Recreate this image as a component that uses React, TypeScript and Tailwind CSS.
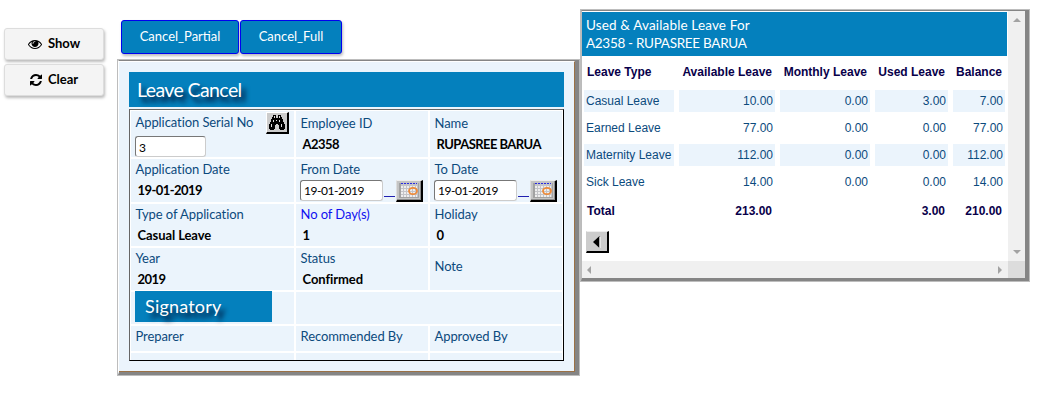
import type { ReactNode } from "react";

const leaveRows = [
  ["Casual Leave", "10.00", "0.00", "3.00", "7.00"],
  ["Earned Leave", "77.00", "0.00", "0.00", "77.00"],
  ["Maternity Leave", "112.00", "0.00", "0.00", "112.00"],
  ["Sick Leave", "14.00", "0.00", "0.00", "14.00"],
];

function Label({ children }: { children: ReactNode }) {
  return <div className="pl-[4.5px] text-[13px] leading-[18px] tracking-[-0.08px] text-[#0b4a7d]">{children}</div>;
}

function Value({ children, tight = false }: { children: ReactNode; tight?: boolean }) {
  return (
    <div className={`pt-[3px] pl-[6.5px] text-[13px] leading-[18px] font-bold text-black ${tight ? "tracking-[-0.55px]" : "tracking-[-0.08px]"}`}>
      {children}
    </div>
  );
}

function Cell({ children, className = "" }: { children?: ReactNode; className?: string }) {
  return <div className={`bg-[#ebf4fc] ${className}`}>{children}</div>;
}

function EyeIcon() {
  return (
    <svg className="mr-[6px] size-[14px]" viewBox="0 0 1792 1792" fill="currentColor">
      <path d="M1664 960q-152-236-381-353 61 104 61 225 0 185-131.500 316.500t-316.500 131.500-316.500-131.500-131.500-316.500q0-121 61-225-229 117-381 353 133 205 333.500 326.500t434.500 121.500 434.500-121.500 333.500-326.500zm-720-384q0-20-14-34t-34-14q-125 0-214.500 89.500t-89.500 214.500q0 20 14 34t34 14 34-14 14-34q0-86 61-147t147-61q20 0 34-14t14-34zm848 384q0 34-20 69-140 230-376.500 368.500t-499.500 138.500-499.500-139-376.500-368q-20-35-20-69t20-69q140-229 376.500-368t499.500-139 499.500 139 376.500 368q20 35 20 69z" />
    </svg>
  );
}

function RefreshIcon() {
  return (
    <svg className="mr-[6px] size-[14px]" viewBox="0 0 1792 1792" fill="currentColor">
      <path d="M1639 1056q0 5-1 7-64 268-268 434.500t-478 166.500q-146 0-282.500-55t-243.500-157l-129 129q-19 19-45 19t-45-19-19-45v-448q0-26 19-45t45-19h448q26 0 45 19t19 45-19 45l-137 137q71 66 161 102t187 36q134 0 250-65t186-179q11-17 53-117 8-23 30-23h192q13 0 22.500 9.500t9.500 22.500zm25-800v448q0 26-19 45t-45 19h-448q-26 0-45-19t-19-45 19-45l138-138q-148-137-349-137-134 0-250 65t-186 179q-11 17-53 117-8 23-30 23h-199q-13 0-22.500-9.500t-9.500-22.500v-7q65-268 270-434.500t480-166.500q146 0 284 55.500t245 156.500l130-129q19-19 45-19t45 19 19 45z" />
    </svg>
  );
}

function CalendarButton() {
  return (
    <button className="h-[22px] w-[27px] shrink-0 border-t border-r-2 border-b-2 border-l border-t-[#eee] border-r-black border-b-black border-l-[#ddd] bg-[#999]">
      <svg className="block" width="24" height="19" viewBox="0 0 24 19" shapeRendering="crispEdges">
        <rect width="24" height="19" fill="#8c8c8c" />
        <rect width="23" height="18" fill="#c4c4c4" />
        <rect x="2" y="2" width="20" height="15" fill="#a2a2a2" />
        <rect x="4" y="2" width="17" height="14" fill="#c4c4c8" />
        <path d="M4 2.5H20" stroke="#2a2ae0" strokeDasharray="2 1" />
        <path d="M4 5.500H20M4 8.500H20M4 11.500H20M4 14.500H20" stroke="#eeeeee" strokeWidth="2" strokeDasharray="2 1" />
        <ellipse cx="16" cy="10" rx="4" ry="3.2" fill="none" stroke="#ee8a38" strokeWidth="1.8" shapeRendering="auto" />
      </svg>
    </button>
  );
}

function DateField() {
  return (
    <div className="mt-[2px] flex items-end pl-1">
      <input
        className="mb-px h-[21px] w-[83px] rounded-[3px] border border-t-[#777] border-r-[#ccc] border-b-[#ccc] border-l-[#777] bg-white px-[3px] text-[12px] tracking-[-0.45px] text-black"
        defaultValue="19-01-2019"
      />
      <span className="mr-px mb-[5px] ml-px h-px w-[11px] bg-[#2020b0]" />
      <CalendarButton />
    </div>
  );
}

function Binoculars() {
  return (
    <svg width="16" height="15" viewBox="0 0 16 15" shapeRendering="crispEdges">
      <path d="M4 0H7V3H9V0H12V2H13V4H14V7H15V9H16V14H15V15H11V14H10V10H9V9H7V10H6V14H5V15H1V14H0V9H1V7H2V4H3V2H4Z" fill="#000" />
      <path d="M5 1V3M10 1V3M4 5V7M10 5V7M2 9V12M12 9V12M7 5V6" stroke="#ddd" transform="translate(.5 0)" />
    </svg>
  );
}

export default function App() {
  return (
    <div className="flex h-[405px] w-[1041px] items-start overflow-hidden bg-white font-['Lato',sans-serif] text-[13px] text-black">
      <aside className="flex w-[117px] flex-col gap-1 pt-7 pl-1">
        <button className="flex h-8 w-[100px] items-center rounded-[3px] border border-[#ddd] bg-[#f4f4f4] pl-[23px] text-[13px] font-bold shadow-[1px_2px_3px_#bbb]">
          <EyeIcon />
          Show
        </button>
        <button className="flex h-8 w-[100px] items-center rounded-[3px] border border-[#ddd] bg-[#f4f4f4] pl-[24px] text-[13px] font-bold shadow-[1px_2px_3px_#bbb]">
          <RefreshIcon />
          <span className="-ml-px">Clear</span>
        </button>
      </aside>

      <main className="w-[463px] shrink-0 pt-5">
        <nav className="flex gap-px pl-1">
          <button className="h-[34px] w-[118px] rounded-[3px] border border-[#0000f0] bg-[#0480bd] text-[13px] text-white shadow-[1px_2px_3px_#bbb]">Cancel_Partial</button>
          <button className="h-[34px] w-[102px] rounded-[3px] border border-[#0000f0] bg-[#0480bd] text-[13px] text-white shadow-[1px_2px_3px_#bbb]">Cancel_Full</button>
        </nav>
        <section className="mt-[5px] h-[317px] w-[463px] border border-[#bdbdbd]">
          <div className="h-[315px] w-[461px] border-t border-r-4 border-b-[3px] border-l border-t-[#858585] border-r-[#858585] border-b-[#858585] border-l-white">
            <div className="h-[311px] w-[456px] border-t border-r border-b border-t-white border-r-[#9b7145] border-b-[#9b7145] bg-[#ebf4fc] pt-[10px] pl-[10px]">
              <h1 className="flex h-[35px] w-[435px] items-center bg-[#0480bd] pl-2 text-[19.5px] tracking-[-0.6px] text-white [text-shadow:4px_5px_5px_#002]">Leave Cancel</h1>
              <div className="mt-[2px] grid h-[252px] w-[435px] grid-cols-[163px_132px_132px] grid-rows-[46px_43px_42px_42px_32px_25px_7px] gap-[2px] border border-t-[#666] border-r-black border-b-black border-l-[#666] bg-white pt-px pl-px">
                <Cell className="pt-[2px]">
                  <div className="flex">
                    <Label>Application Serial No</Label>
                    <button className="-mt-px mr-[5px] ml-auto flex h-[22px] w-[23px] items-center justify-center border-t border-r-2 border-b-2 border-l border-t-white border-r-black border-b-black border-l-white bg-[#ccc]">
                      <Binoculars />
                    </button>
                  </div>
                  <input className="mt-[2px] ml-1 block h-[21px] w-[71px] rounded-[3px] border border-t-[#777] border-r-[#ccc] border-b-[#ccc] border-l-[#777] bg-white px-[3px] pt-px text-[12px]" defaultValue="3" />
                </Cell>
                <Cell className="pt-[3px]"><Label>Employee ID</Label><Value tight>A2358</Value></Cell>
                <Cell className="pt-[3px]"><Label>Name</Label><Value tight>RUPASREE BARUA</Value></Cell>

                <Cell className="pt-px"><Label>Application Date</Label><Value tight>19-01-2019</Value></Cell>
                <Cell className="pt-px"><Label>From Date</Label><DateField /></Cell>
                <Cell className="pt-px"><Label>To Date</Label><DateField /></Cell>

                <Cell className="pt-px"><Label>Type of Application</Label><Value>Casual Leave</Value></Cell>
                <Cell className="pt-px"><div className="pl-[4.5px] leading-[18px] tracking-[-0.08px] text-[#1010f0]">No of Day(s)</div><Value>1</Value></Cell>
                <Cell className="pt-px"><Label>Holiday</Label><Value>0</Value></Cell>

                <Cell className="pt-px"><Label>Year</Label><Value tight>2019</Value></Cell>
                <Cell className="pt-px"><Label>Status</Label><Value>Confirmed</Value></Cell>
                <Cell className="pt-[9px]"><Label>Note</Label></Cell>

                <Cell><h2 className="-mt-px ml-1 flex h-[31px] w-[137px] items-center bg-[#0480bd] pb-px pl-[10px] text-[18px] tracking-[0.2px] text-white [text-shadow:4px_5px_5px_#002]">Signatory</h2></Cell>
                <Cell className="col-span-2" />

                <Cell className="pt-px"><Label>Preparer</Label></Cell>
                <Cell className="pt-px"><Label>Recommended By</Label></Cell>
                <Cell className="pt-px"><Label>Approved By</Label></Cell>
                <Cell /><Cell /><Cell />
              </div>
            </div>
          </div>
        </section>
      </main>

      <section className="mt-[9px] h-[273px] w-[450px] shrink-0 border border-[#bdbdbd]">
        <div className="grid h-[271px] w-[448px] grid-cols-[426px_17px] grid-rows-[250px_17px] border-t border-r-4 border-b-[3px] border-l border-t-[#858585] border-r-[#858585] border-b-[#858585] border-l-[#bbb] bg-white">
          <div className="pt-px font-['Liberation_Sans',sans-serif] text-[12px] text-[#0b4a7d]">
            <h3 className="h-[44px] w-[425px] bg-[#0480bd] pt-1 pl-1 font-['Lato',sans-serif] leading-[18px] text-white">
              <span className="block text-[13.5px] tracking-[0.15px]">Used &amp; Available Leave For</span>
              <span className="block text-[13.5px] tracking-[-0.3px]">A2358 - RUPASREE BARUA</span>
            </h3>
            <div className="grid grid-cols-[90px_96px_90px_73px_52px] grid-rows-[24px_22px_22px_22px_22px_26px] gap-[5px] pt-[5px] pl-[2px]">
              {["Leave Type", "Available Leave", "Monthly Leave", "Used Leave", "Balance"].map((h, i) => (
                <div key={h} className={`whitespace-nowrap pt-[2px] leading-[18px] font-bold text-[#08004a] ${i ? "pr-[3px] text-right" : "pl-[3px]"}`}>{h}</div>
              ))}
              {leaveRows.map((row, r) =>
                row.map((v, i) => (
                  <div key={`${r}-${i}`} className={`whitespace-nowrap leading-[22px] ${r % 2 ? "" : "bg-[#ebf4fc]"} ${i ? "pr-[2px] text-right" : "pl-[2px]"}`}>{v}</div>
                ))
              )}
              {["Total", "213.00", "", "3.00", "210.00"].map((v, i) => (
                <div key={i} className={`leading-[26px] font-bold text-[#08004a] ${i ? "pr-[3px] text-right" : "pl-[3px]"}`}>{v}</div>
              ))}
            </div>
            <button className="mt-[7px] ml-1 flex h-[22px] w-[23px] items-center border-t border-r-2 border-b-2 border-l border-t-[#eee] border-r-black border-b-black border-l-[#ccc] bg-[#ccc] pl-[6px]">
              <svg width="8" height="12" viewBox="0 0 8 12"><path d="M0 6L6.500 0V12Z" fill="#000" /><path d="M7 1V12" stroke="#fff" /></svg>
            </button>
          </div>
          <div className="flex flex-col items-center justify-between bg-[#f0f0f0] py-[7px]">
            <svg width="8" height="4"><path d="M0 4L4 0L8 4Z" fill="#a3a3a3" /></svg>
            <svg width="8" height="4"><path d="M0 0L4 4L8 0Z" fill="#a3a3a3" /></svg>
          </div>
          <div className="flex items-center justify-between bg-[#f0f0f0] pr-[6px] pl-[5px]">
            <svg width="4" height="8"><path d="M4 0L0 4L4 8Z" fill="#a3a3a3" /></svg>
            <svg width="4" height="8"><path d="M0 0L4 4L0 8Z" fill="#a3a3a3" /></svg>
          </div>
          <div className="bg-[#dcdcdc]" />
        </div>
      </section>
    </div>
  );
}
